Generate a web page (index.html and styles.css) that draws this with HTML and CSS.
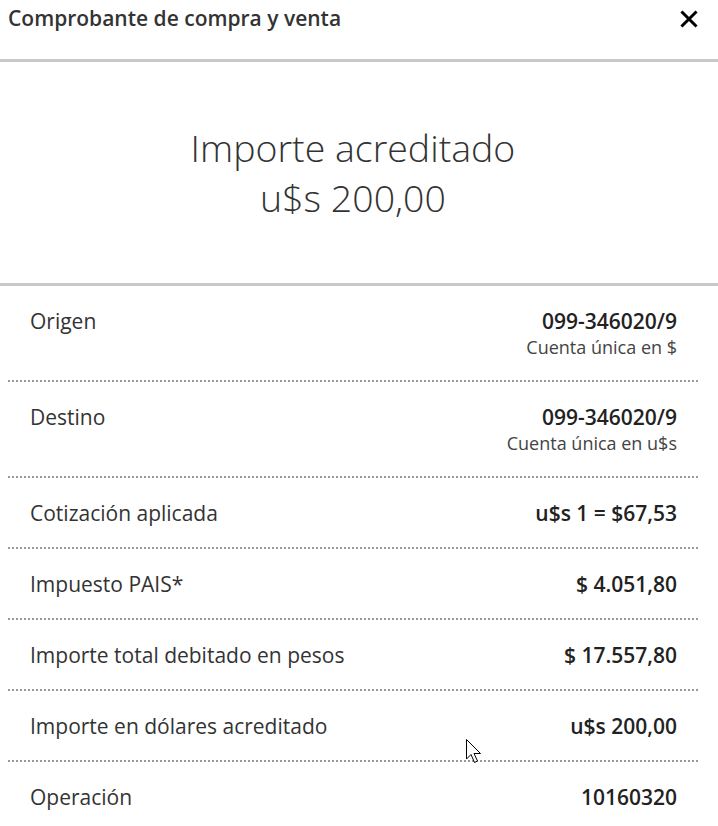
FILE: index.html
```html
<!DOCTYPE html>
<html lang="es">
<head>
<meta charset="utf-8">
<title>Comprobante de compra y venta</title>
<link rel="stylesheet" href="styles.css">
</head>
<body>
<div class="modal">
  <header class="head">
    <h1 class="title">Comprobante de compra y venta</h1>
    <button class="close" aria-label="Cerrar">
      <svg width="18" height="18" viewBox="0 0 18 18"><path d="M2.5 2.5 L15.5 15.5 M15.5 2.5 L2.5 15.5" stroke="#000" stroke-width="3" stroke-linecap="square" fill="none"/></svg>
    </button>
  </header>
  <section class="hero">
    <div class="hero-line">Importe acreditado</div>
    <div class="hero-line">u$s 200,00</div>
  </section>
  <div class="rows">
    <div class="row two">
      <div class="label">Origen</div>
      <div class="value"><div class="main">099-346020/9</div><div class="sub">Cuenta única en $</div></div>
    </div>
    <div class="row two">
      <div class="label">Destino</div>
      <div class="value"><div class="main">099-346020/9</div><div class="sub">Cuenta única en u$s</div></div>
    </div>
    <div class="row">
      <div class="label">Cotización aplicada</div>
      <div class="value"><div class="main">u$s 1 = $67,53</div></div>
    </div>
    <div class="row">
      <div class="label">Impuesto PAIS*</div>
      <div class="value"><div class="main">$ 4.051,80</div></div>
    </div>
    <div class="row">
      <div class="label">Importe total debitado en pesos</div>
      <div class="value"><div class="main">$ 17.557,80</div></div>
    </div>
    <div class="row">
      <div class="label">Importe en dólares acreditado</div>
      <div class="value"><div class="main">u$s 200,00</div></div>
    </div>
    <div class="row last">
      <div class="label">Operación</div>
      <div class="value"><div class="main">10160320</div></div>
    </div>
  </div>
  <svg class="cursor" width="20" height="28" viewBox="0 0 20 28"><path d="M1.5 1.5 L1.5 21 L6 16.5 L9.5 24.5 L12.5 23 L9 15.5 L15.5 15.5 Z" fill="#fff" stroke="#000" stroke-width="1" stroke-linejoin="miter"/></svg>
</div>
</body>
</html>
```
FILE: styles.css
```css
* { box-sizing: border-box; }
html, body { margin: 0; padding: 0; background: #fff; }
body { font-family: "Open Sans", "Liberation Sans", sans-serif; color: #333; }
.modal { position: relative; width: 718px; }
.head {
  height: 62px;
  display: flex;
  justify-content: space-between;
  align-items: flex-start;
  padding: 4px 20px 0 8px;
  border-bottom: 3px solid #c8c8c8;
}
.title { margin: 0; font-size: 21px; line-height: 28px; font-weight: 600; color: #333; }
.close { border: 0; background: none; padding: 0; margin-top: 6px; width: 18px; height: 18px; display: block; cursor: pointer; }
.close svg { display: block; }
.hero {
  padding: 61px 12px 60px 0;
  text-align: center;
  border-bottom: 3px solid #c8c8c8;
  font-weight: 300;
  font-size: 37.5px;
  line-height: 50px;
  color: #333;
}
.rows { margin: 0 20px 0 8px; }
.row {
  display: flex;
  justify-content: space-between;
  align-items: flex-start;
  padding: 21px 21px 20px 22px;
  border-bottom: 2px dotted #9a9a9a;
}
.row.two { padding-bottom: 21px; }
.row.last { border-bottom: 0; }
.label { font-size: 21px; line-height: 28px; color: #333; }
.value { text-align: right; }
.main { font-size: 21px; line-height: 28px; font-weight: 600; color: #222; }
.sub { font-size: 18px; line-height: 24px; color: #444; }
.cursor { position: absolute; left: 465px; top: 738px; }
```
